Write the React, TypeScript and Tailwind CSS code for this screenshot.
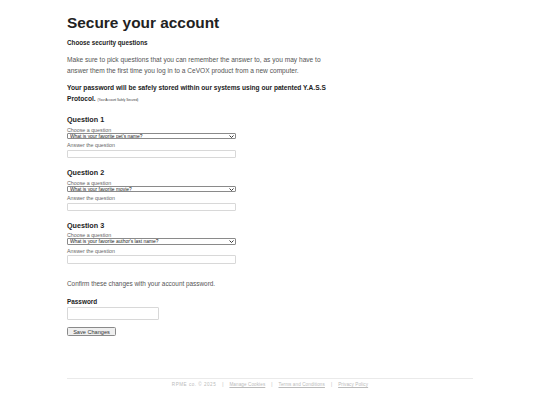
import React from "react";

// ─── Data ─────────────────────────────────────────────────────────────────────

const questions = [
  { n: 1, value: "What is your favorite pet's name?" },
  { n: 2, value: "What is your favorite movie?" },
  { n: 3, value: "What is your favorite author's last name?" },
];

// ─── Pieces ───────────────────────────────────────────────────────────────────

function Chevron() {
  return (
    <svg
      viewBox="0 0 10 6"
      className="pointer-events-none absolute right-[2px] top-[2px] h-[3px] w-[5px]"
    >
      <path d="M1 1 L5 5 L9 1" fill="none" stroke="#222" strokeWidth="1.8" />
    </svg>
  );
}

function QuestionBlock({ n, value }: { n: number; value: string }) {
  return (
    <div className="mb-[10px]">
      <h3 className="text-[7.2px] leading-[9px] font-bold text-[#222]">
        Question {n}
      </h3>
      <div className="mt-[2.5px] text-[5.3px] leading-[6px] text-[#666]">
        Choose a question
      </div>
      <div className="relative w-[169px]">
        <select
          defaultValue={value}
          className="block h-[6.7px] w-full appearance-none rounded-[1px] border-[0.5px] border-[#8a8a8a] bg-white px-[2px] py-0 text-[4.9px] leading-[5px] text-[#222] outline-none"
        >
          <option>{value}</option>
        </select>
        <Chevron />
      </div>
      <div className="mt-[3px] text-[5.3px] leading-[6px] text-[#666]">
        Answer the question
      </div>
      <input
        type="text"
        className="mt-[1.3px] block h-[8.4px] w-[169px] rounded-[1px] border-[0.5px] border-[#d8d8d8] bg-white"
      />
    </div>
  );
}

// ─── Page ─────────────────────────────────────────────────────────────────────

export default function App() {
  return (
    <div className="min-h-[405px] w-full bg-white font-['Liberation_Sans',Arial,sans-serif]">
      <div className="mx-auto w-[406px] pt-[14px]">
        <h1 className="text-[15.4px] leading-[18px] font-bold text-[#222]">
          Secure your account
        </h1>

        <h2 className="mt-[7px] text-[6.3px] leading-[8px] font-bold text-[#222]">
          Choose security questions
        </h2>

        <p className="mt-[8.4px] w-[262px] text-[6.6px] leading-[10.7px] text-[#555]">
          Make sure to pick questions that you can remember the answer to, as you
          may have to answer them the first time you log in to a CeVOX product
          from a new computer.
        </p>

        <div className="mt-[6.7px] text-[6.6px] leading-[10.5px] font-bold text-[#222]">
          <div>
            Your password will be safely stored within our systems using our
            patented Y.A.S.S
          </div>
          <div className="flex items-baseline gap-[2px]">
            <span>Protocol.</span>
            <span className="text-[3px] font-normal text-[#333]">
              (Your Account Safely Secured)
            </span>
          </div>
        </div>

        <div className="mt-[9.7px]">
          {questions.map((q) => (
            <QuestionBlock key={q.n} n={q.n} value={q.value} />
          ))}
        </div>

        <p className="mt-[16px] text-[6.4px] leading-[8px] text-[#555]">
          Confirm these changes with your account password.
        </p>

        <div className="mt-[10.3px] text-[6.4px] leading-[8px] font-bold text-[#222]">
          Password
        </div>
        <input
          type="password"
          className="mt-[1px] block h-[12.5px] w-[92px] rounded-[1px] border-[0.5px] border-[#d8d8d8] bg-white"
        />

        <button
          type="button"
          className="mt-[7px] block h-[9px] w-[49px] rounded-[1.5px] border-[0.5px] border-[#8a8a8a] bg-[#efefef] text-[5.6px] leading-[8px] text-[#333]"
        >
          Save Changes
        </button>

        {/* Footer */}
        <div className="mt-[42.6px] border-t-[0.5px] border-[#eaeaea] pt-[3px]">
          <div className="flex items-center justify-center gap-[6px] text-[4.6px] leading-[6px] text-[#bbb]">
            <span className="tracking-[0.5px]">RPME co. © 2025</span>
            <span>|</span>
            <a className="tracking-[0.1px] underline">Manage Cookies</a>
            <span>|</span>
            <a className="tracking-[0.1px] underline">Terms and Conditions</a>
            <span>|</span>
            <a className="tracking-[0.1px] underline">Privacy Policy</a>
          </div>
        </div>
      </div>
    </div>
  );
}
